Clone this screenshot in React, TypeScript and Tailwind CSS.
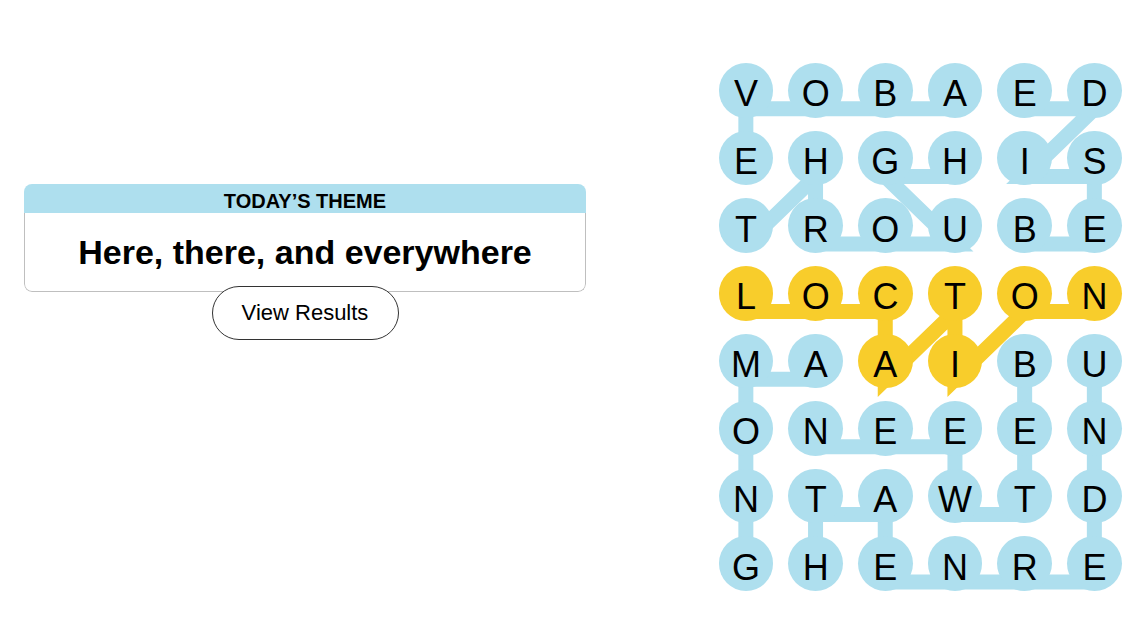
const LETTERS = [
  "VOBAED",
  "EHGHIS",
  "TROUBE",
  "LOCTON",
  "MAAIBU",
  "ONEEEN",
  "NTAWTD",
  "GHENRE",
];

// [row, col], 1-indexed
const WORDS: { path: [number, number][]; span?: boolean }[] = [
  { path: [[1, 4], [1, 3], [1, 2], [1, 1], [2, 1]] },
  { path: [[3, 1], [2, 2], [3, 2], [3, 3], [3, 4], [2, 3], [2, 4]] },
  { path: [[3, 5], [3, 6], [2, 6], [2, 5], [1, 6], [1, 5]] },
  { path: [[5, 2], [5, 1], [6, 1], [7, 1], [8, 1]] },
  { path: [[5, 5], [6, 5], [7, 5], [7, 4], [6, 4], [6, 3], [6, 2]] },
  { path: [[5, 6], [6, 6], [7, 6], [8, 6], [8, 5], [8, 4], [8, 3], [7, 3], [7, 2], [8, 2]] },
  { path: [[4, 1], [4, 2], [4, 3], [5, 3], [4, 4], [5, 4], [4, 5], [4, 6]], span: true },
];

const CW = 69.7;
const CH = 67.6;
const BLUE = "#aedfee";
const YELLOW = "#f8cd2b";

const spanCells = new Set(
  WORDS.filter((w) => w.span).flatMap((w) => w.path.map(([r, c]) => `${r}-${c}`))
);

function Board() {
  return (
    <div className="relative w-[418.2px]">
      <svg className="absolute inset-0" width={418.2} height={CH * 8}>
        {WORDS.map((w, i) => (
          <polyline
            key={i}
            points={w.path.map(([r, c]) => `${(c - 0.5) * CW},${(r - 0.5) * CH + 18}`).join(" ")}
            fill="none"
            stroke={w.span ? YELLOW : BLUE}
            strokeWidth={15}
            strokeLinejoin="miter"
          />
        ))}
      </svg>
      <div className="relative grid grid-cols-6 auto-rows-[67.6px]">
        {LETTERS.flatMap((row, r) =>
          row.split("").map((ch, c) => (
            <div key={`${r}-${c}`} className="flex items-center justify-center">
              <div
                className={`w-[54.6px] h-[54.6px] rounded-full flex items-center justify-center ${
                  spanCells.has(`${r + 1}-${c + 1}`) ? "bg-[#f8cd2b]" : "bg-[#aedfee]"
                }`}
              >
                <span className="translate-y-[4px] text-[36px] leading-none text-black font-['Liberation_Sans',Arial,sans-serif]">
                  {ch}
                </span>
              </div>
            </div>
          ))
        )}
      </div>
    </div>
  );
}

export default function App() {
  return (
    <main className="flex w-full h-[641px] bg-white overflow-hidden font-['Liberation_Sans',Arial,sans-serif]">
      <section className="ml-[24px] w-[562px] pt-[184px] flex flex-col items-center">
        <div className="w-full rounded-[8px] overflow-hidden">
          <div className="h-[29px] bg-[#aedfee] flex items-center justify-center pt-[5px]">
            <span className="text-[20px] font-bold text-black leading-none">TODAY’S THEME</span>
          </div>
          <div className="h-[78.5px] border-x border-b border-[#bfbfbf] rounded-b-[8px] flex items-center justify-center">
            <h1 className="text-[34px] font-bold text-black leading-none">Here, there, and everywhere</h1>
          </div>
        </div>
        <button className="relative -mt-[6px] w-[187px] h-[54px] rounded-full border border-[#333] bg-white text-[22px] text-black">
          View Results
        </button>
      </section>
      <section className="ml-[125.15px] pt-[56.7px]">
        <Board />
      </section>
    </main>
  );
}
